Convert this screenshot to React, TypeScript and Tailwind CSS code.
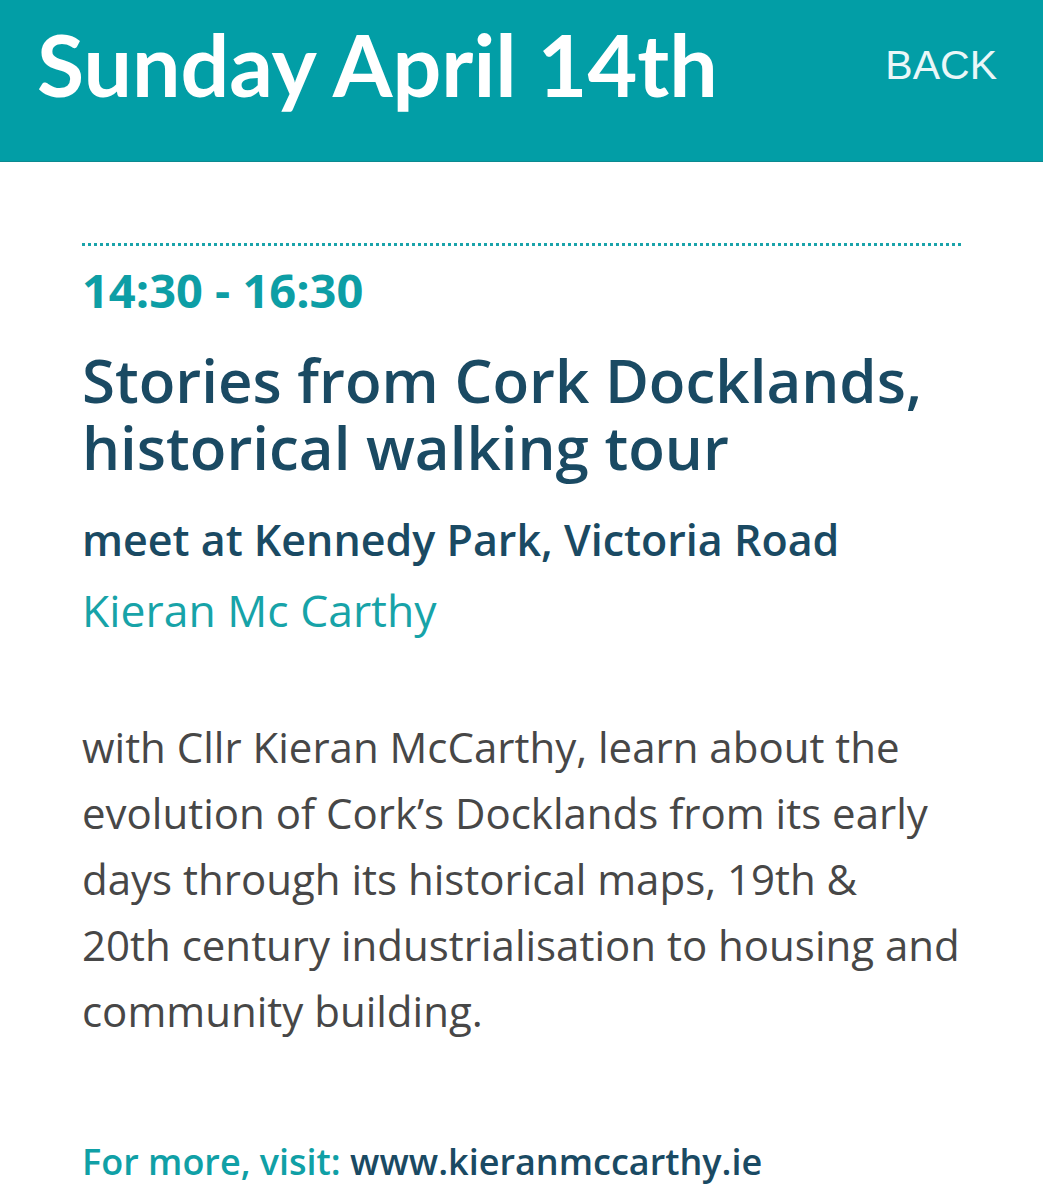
import React from 'react';

const font = { fontFamily: '"Open Sans", Lato, sans-serif' };

const App: React.FC = () => {
  return (
    <div className="min-h-[1200px] bg-white" style={font}>
      <header className="flex h-[162px] items-start justify-between border-b border-[#0b8a90] bg-[#029ea6] pl-[37px] pr-[46px]">
        <h1
          className="mt-[14px] text-[86px] font-bold leading-[100px] text-white"
          style={{ fontFamily: 'Lato, sans-serif' }}
        >
          Sunday April 14th
        </h1>
        <button
          className="mt-[42px] text-[41px] leading-[46px] text-[#eaf7f8]"
          style={{ fontFamily: '"Liberation Sans", Arial, sans-serif' }}
        >
          BACK
        </button>
      </header>

      <main className="px-[82px] pt-[81px]">
        <div className="border-t-[3px] border-dotted border-[#1aa3aa]" />

        <p className="mt-[18px] text-[47px] font-bold leading-[52px] text-[#0d9ea5]">14:30 - 16:30</p>

        <h2 className="mt-[31px] text-[60px] font-[650] leading-[67px] text-[#1a4a63]">
          Stories from Cork Docklands, historical walking tour
        </h2>

        <p className="mt-[31px] text-[43px] font-[650] leading-[56px] text-[#1a4a63]">
          meet at Kennedy Park, Victoria Road
        </p>

        <p className="mt-[14px] text-[44.5px] leading-[56px] text-[#17a3a8]">Kieran Mc Carthy</p>

        <p className="mt-[76px] text-[42px] leading-[66px] text-[#474747]">
          with Cllr Kieran McCarthy, learn about the evolution of Cork’s Docklands from its early days
          through its historical maps, 19th &amp;
          <br />
          20th century industrialisation to housing and community building.
        </p>

        <p className="mt-[95px] text-[36px] font-[650] leading-[46px]">
          <span className="text-[#10a0a6]">For more, visit: </span>
          <span className="text-[#1a4a63]">www.kieranmccarthy.ie</span>
        </p>
      </main>
    </div>
  );
};

export default App;
